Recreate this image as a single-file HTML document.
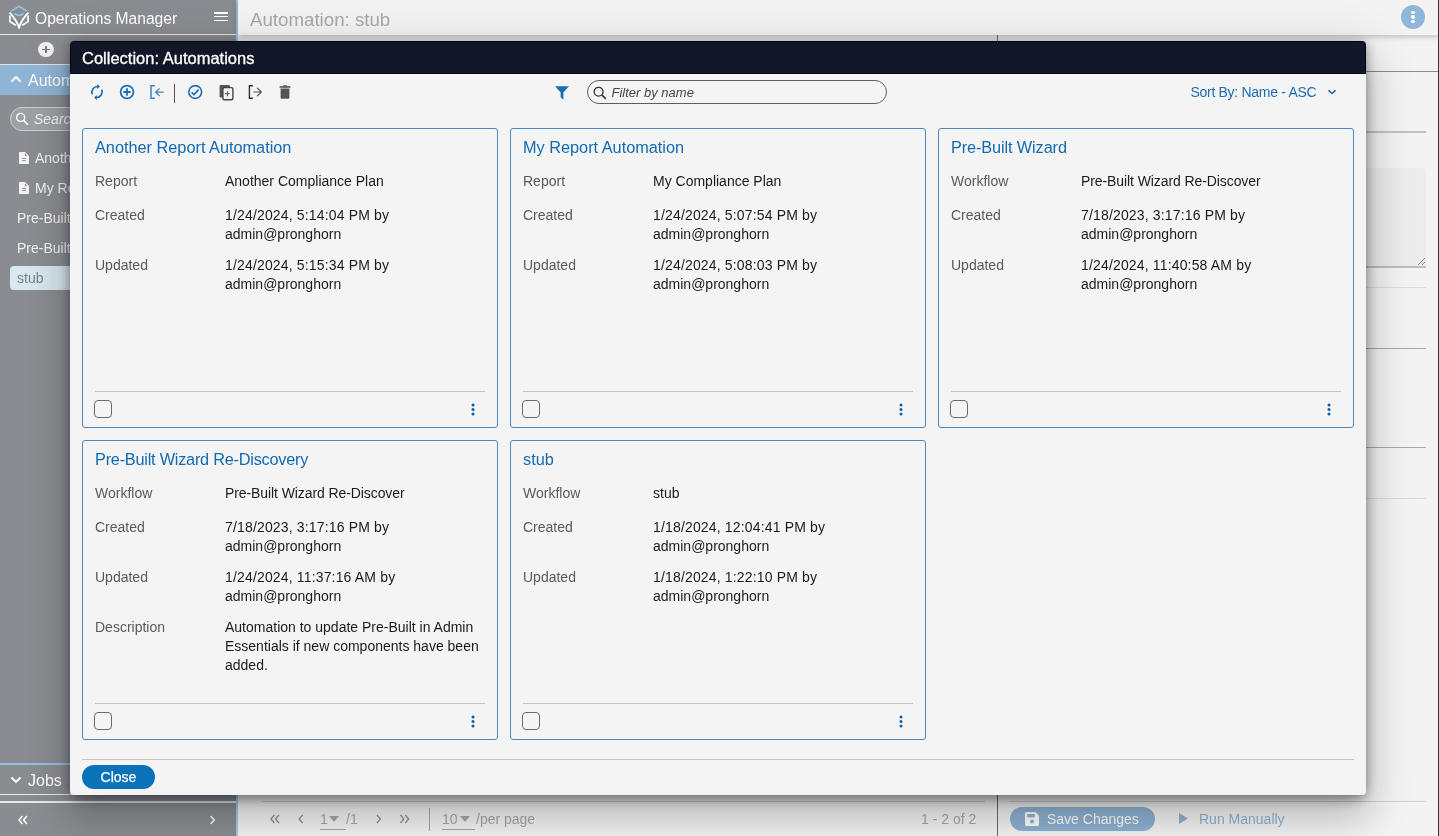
<!DOCTYPE html>
<html><head><meta charset="utf-8">
<style>
*{box-sizing:border-box;margin:0;padding:0}
html,body{width:1439px;height:836px;overflow:hidden}
body{font-family:"Liberation Sans",sans-serif;background:#f3f3f3;position:relative;color:#222}
#root{position:absolute;left:0;top:0;width:1439px;height:836px;will-change:transform}
.a{position:absolute}
/* sidebar */
#side{left:0;top:0;width:237px;height:836px;background:#8b8c91;color:#f2f2f2}
#sideborder{left:236px;top:0;width:2px;height:836px;background:#9ccbea}
.sl{font-size:14px;white-space:nowrap}
/* main */
#hdr{left:238px;top:0;width:1201px;height:35px;background:#f3f3f3}
.ln{height:1px}
/* modal */
#modal{left:70px;top:41px;width:1296px;height:754px;background:#f4f4f4;border-radius:4px;overflow:hidden;box-shadow:0 2px 12px rgba(10,15,30,.4),0 11px 15px -7px rgba(0,0,0,.2),0 24px 38px 3px rgba(0,0,0,.14),0 9px 46px 8px rgba(0,0,0,.12)}
#mtitle{left:0;top:0;width:1296px;height:33px;background:#111726;color:#fff;-webkit-text-stroke:0.3px #fff;font-size:16.5px;line-height:34px;padding-left:11px;border:1px solid #03050c;border-bottom-width:1.5px;line-height:32px}
.card{position:absolute;width:416px;height:300px;border:1px solid #4f86bf;border-radius:3px}
.card .t{position:absolute;left:12px;top:8.4px;font-size:16.3px;line-height:20px;color:#126ab2;white-space:nowrap}
.card .l{position:absolute;left:12px;font-size:14px;line-height:19px;color:#5a5a5a;white-space:nowrap}
.card .v{position:absolute;left:142px;font-size:14px;line-height:19px;color:#1b1b1b;white-space:nowrap}
.card .sep{position:absolute;left:12px;width:390px;top:262px;height:1px;background:#c4c4c4}
.card .cb{position:absolute;left:11px;top:271px;width:18px;height:18px;border:1.6px solid #6a6a6a;border-radius:4px}
.card .kb{position:absolute;left:386.9px;top:272.5px;fill:#0c5eae}
</style></head><body><div id="root">
<!-- SIDEBAR -->
<div id="side" class="a">
  <svg class="a" style="left:8px;top:5px" width="22" height="24" viewBox="0 0 22 24">
    <path d="M3.4 6.1 L11 1.2 L18.6 6.1" fill="none" stroke="#8ec5ea" stroke-width="1.7"/>
    <path d="M6.4 8.5 Q11 12.1 15.6 8.5" fill="none" stroke="#8ec5ea" stroke-width="1.7"/>
    <path d="M1.6 7.6 Q8 14 11 22.4 Q14 14 20.4 7.6" fill="none" stroke="#fff" stroke-width="1.9"/>
    <path d="M1.9 10.6 V16.6 L7.8 20.3" fill="none" stroke="#fff" stroke-width="1.7"/>
    <path d="M20.1 10.6 V16.6 L14.2 20.3" fill="none" stroke="#fff" stroke-width="1.7"/>
  </svg>
  <div class="a" style="left:35px;top:8.5px;font-size:15.6px;line-height:20px;color:#fff">Operations Manager</div>
  <div class="a" style="left:214px;top:12px;width:14px;height:1.7px;background:#fff"></div>
  <div class="a" style="left:214px;top:15.8px;width:14px;height:1.7px;background:#fff"></div>
  <div class="a" style="left:214px;top:19.5px;width:14px;height:1.7px;background:#fff"></div>
  <div class="a" style="left:0;top:33.5px;width:237px;height:1.6px;background:#e4e5e7"></div>
  <div class="a" style="left:37.9px;top:41.5px;width:15.9px;height:15.9px;border-radius:50%;background:#f2f2f2"></div>
  <div class="a" style="left:42px;top:48.7px;width:7.8px;height:1.6px;background:#7a7b80"></div>
  <div class="a" style="left:45.1px;top:45.8px;width:1.6px;height:7.5px;background:#7a7b80"></div>
  <div class="a" style="left:0;top:64px;width:237px;height:1px;background:#e4e5e7"></div>
  <div class="a" style="left:0;top:65px;width:237px;height:30px;background:#8fb5d6"></div>
  <div class="a" style="left:28px;top:71px;font-size:16px;line-height:20px;color:#fff">Automations</div>
  <svg class="a" style="left:10px;top:75px" width="12" height="8" viewBox="0 0 12 8"><path d="M1.5 6.5 L6 2 L10.5 6.5" fill="none" stroke="#fff" stroke-width="1.8"/></svg>
  <div class="a" style="left:10px;top:106.5px;width:200px;height:24.5px;border:1px solid #cfd0d3;border-radius:13px;background:#9fa0a5"></div>
  <svg class="a" style="left:15px;top:111px" width="16" height="16" viewBox="0 0 16 16"><circle cx="5.6" cy="6.4" r="4" fill="none" stroke="#fff" stroke-width="1.4"/><path d="M8.6 9.4 L13 13.8" stroke="#fff" stroke-width="1.6"/></svg>
  <div class="a sl" style="left:34px;top:111px;font-style:italic;color:#f2f2f2">Search</div>
  <svg class="a" style="left:19px;top:152px" width="10" height="12" viewBox="0 0 10 12"><path d="M0 1 Q0 0 1 0 L6 0 L10 4 L10 11 Q10 12 9 12 L1 12 Q0 12 0 11 Z" fill="#f4f4f4"/><path d="M2.9 6.4 H7 M2.9 8.6 H7" stroke="#8b8c91" stroke-width="0.9"/><path d="M5.9 1.6 L5.9 3.8 L8.1 3.8Z" fill="#77787d"/></svg>
  <div class="a sl" style="left:35px;top:150px">Another Report Automation</div>
  <svg class="a" style="left:19px;top:182px" width="10" height="12" viewBox="0 0 10 12"><path d="M0 1 Q0 0 1 0 L6 0 L10 4 L10 11 Q10 12 9 12 L1 12 Q0 12 0 11 Z" fill="#f4f4f4"/><path d="M2.9 6.4 H7 M2.9 8.6 H7" stroke="#8b8c91" stroke-width="0.9"/><path d="M5.9 1.6 L5.9 3.8 L8.1 3.8Z" fill="#77787d"/></svg>
  <div class="a sl" style="left:35px;top:180px">My Report Automation</div>
  <div class="a sl" style="left:17px;top:210px">Pre-Built Wizard</div>
  <div class="a sl" style="left:17px;top:240px">Pre-Built Wizard Re-Discovery</div>
  <div class="a" style="left:10px;top:266px;width:220px;height:24px;border-radius:4px;background:#d8e8f0"></div>
  <div class="a sl" style="left:17px;top:270px;color:#7d7e82">stub</div>
  <div class="a" style="left:0;top:763px;width:237px;height:2px;background:#8fc3e6"></div>
  <svg class="a" style="left:10px;top:776px" width="12" height="8" viewBox="0 0 12 8"><path d="M1.5 1.5 L6 6 L10.5 1.5" fill="none" stroke="#fff" stroke-width="1.8"/></svg>
  <div class="a" style="left:28px;top:771px;font-size:16px;line-height:20px;color:#fff">Jobs</div>
  <div class="a" style="left:0;top:794px;width:237px;height:1px;background:#e8e8ea"></div>
  <div class="a" style="left:0;top:801px;width:237px;height:1.5px;background:#e8e8ea"></div>
  <svg class="a" style="left:10px;top:806px" width="30" height="28"><path d="M12.4 10 L9 14 L12.4 18 M16.9 10 L13.5 14 L16.9 18" fill="none" stroke="#fff" stroke-width="1.5"/></svg>
  <svg class="a" style="left:200px;top:806px" width="30" height="28"><path d="M10.6 10 L14.4 14 L10.6 18" fill="none" stroke="#fff" stroke-width="1.5"/></svg>
</div>
<div id="sideborder" class="a"></div>

<!-- MAIN BACKGROUND -->
<div id="hdr" class="a" style="box-shadow:0 1px 6px rgba(0,0,0,.28)"></div>
<div class="a" style="left:250px;top:9px;font-size:18.7px;line-height:22px;color:#a8a8a8">Automation: stub</div>
<div class="a" style="left:1401px;top:5px;width:24px;height:24px;border-radius:50%;background:#8fb7d9"></div>
<div class="a" style="left:1411.3px;top:10.9px;width:3.4px;height:3.4px;border-radius:50%;background:#fff"></div>
<div class="a" style="left:1411.3px;top:15.4px;width:3.4px;height:3.4px;border-radius:50%;background:#fff"></div>
<div class="a" style="left:1411.3px;top:19.9px;width:3.4px;height:3.4px;border-radius:50%;background:#fff"></div>
<div class="a" style="left:997px;top:35px;width:1px;height:801px;background:#6a6a6a"></div>
<div class="a" style="left:1438px;top:0;width:1px;height:836px;background:#333"></div>
<div class="a ln" style="left:997px;top:71px;width:441px;background:#8a8a90"></div>
<div class="a" style="left:1005px;top:131px;width:421px;height:2px;background:#c2c2c2"></div>
<div class="a" style="left:1005px;top:168px;width:421px;height:98px;background:#ececec;border-radius:4px 4px 0 0"></div><div class="a" style="left:1005px;top:266px;width:421px;height:2px;background:#bdbdbd"></div><svg class="a" style="left:1414px;top:254px" width="12" height="12"><path d="M11 4 L4 11 M11 8 L8 11" stroke="#8a8a8a" stroke-width="1"/></svg>
<div class="a ln" style="left:1005px;top:287px;width:421px;background:#dcdcdc"></div>
<div class="a ln" style="left:1005px;top:348px;width:421px;background:#a8a8a8"></div>
<div class="a ln" style="left:1005px;top:447px;width:421px;background:#a8a8a8"></div>
<div class="a ln" style="left:1005px;top:498px;width:421px;background:#dcdcdc"></div>
<div class="a ln" style="left:1009px;top:801px;width:417px;background:#d0d0d0"></div>
<div class="a ln" style="left:262px;top:801px;width:723px;background:#c8c8c8"></div>
<!-- BOTTOM BAR -->
<svg class="a" style="left:264px;top:806px" width="50" height="28"><path d="M10.4 9 L7 13 L10.4 17 M14.9 9 L11.5 13 L14.9 17 M38.7 9 L35.1 13 L38.7 17" fill="none" stroke="#8e8e8e" stroke-width="1.3"/></svg>

<div class="a" style="left:320px;top:810px;font-size:14px;line-height:19px;color:#a6a6a6">1</div>
<svg class="a" style="left:329px;top:816px" width="10" height="6"><path d="M0 0 H10 L5 6Z" fill="#a6a6a6"/></svg>
<div class="a" style="left:320px;top:829px;width:26px;height:1px;background:#a6a6a6"></div>
<div class="a" style="left:346px;top:810px;font-size:14px;line-height:19px;color:#a6a6a6">/1</div>
<svg class="a" style="left:368px;top:806px" width="50" height="28"><path d="M8.9 9 L12.5 13 L8.9 17 M32.5 9 L35.8 13 L32.5 17 M37.2 9 L40.7 13 L37.2 17" fill="none" stroke="#8e8e8e" stroke-width="1.3"/></svg>

<div class="a" style="left:429px;top:808px;width:1px;height:23px;background:#a6a6a6"></div>
<div class="a" style="left:442px;top:810px;font-size:14px;line-height:19px;color:#a6a6a6">10</div>
<svg class="a" style="left:460px;top:816px" width="10" height="6"><path d="M0 0 H10 L5 6Z" fill="#a6a6a6"/></svg>
<div class="a" style="left:442px;top:829px;width:33px;height:1px;background:#a6a6a6"></div>
<div class="a" style="left:476px;top:810px;font-size:14px;line-height:19px;color:#a6a6a6">/per page</div>
<div class="a" style="left:921px;top:810px;font-size:14px;line-height:19px;color:#a6a6a6">1 - 2 of 2</div>
<div class="a" style="left:1010px;top:807px;width:145px;height:24px;border-radius:12px;background:#8fb3d3"></div>
<svg class="a" style="left:1025px;top:812px" width="14" height="14" viewBox="0 0 14 14"><path d="M0 1.5 Q0 0 1.5 0 H10.5 L14 3.5 V12.5 Q14 14 12.5 14 H1.5 Q0 14 0 12.5Z" fill="#fff"/><rect x="2.2" y="2" width="7.5" height="3.4" fill="#8fb3d3"/><circle cx="7" cy="9.6" r="2" fill="#8fb3d3"/></svg>
<div class="a" style="left:1047px;top:810px;font-size:14px;line-height:19px;color:#fff">Save Changes</div>
<svg class="a" style="left:1179px;top:813px" width="9" height="11"><path d="M0 0 L9 5.5 L0 11Z" fill="#8fb3d3"/></svg>
<div class="a" style="left:1199px;top:810px;font-size:14px;line-height:19px;color:#8fb3d3">Run Manually</div>
<!-- MODAL -->
<div id="modal" class="a">
  <div id="mtitle" class="a">Collection: Automations</div>
  <svg class="a" style="left:16px;top:39px" width="24" height="24" viewBox="0 0 24 24"><g fill="none" stroke="#1c6db3" stroke-width="1.7"><path d="M6.4 14.4 A5.6 5.6 0 0 1 11.8 6.5"/><path d="M15.7 9.6 A5.6 5.6 0 0 1 10.3 17.5"/></g><path d="M11.2 4.1 L14 6.6 L11.2 9.1Z" fill="#1c6db3"/><path d="M10.8 14.9 L8 17.4 L10.8 19.9Z" fill="#1c6db3"/></svg>
  <svg class="a" style="left:49px;top:43px" width="16" height="16" viewBox="0 0 16 16"><circle cx="8" cy="8" r="6.4" fill="none" stroke="#1c6db3" stroke-width="1.7"/><path d="M8 4.3 V11.7 M4.3 8 H11.7" stroke="#1c6db3" stroke-width="1.8"/></svg>
  <svg class="a" style="left:79px;top:43px" width="16" height="16" viewBox="0 0 16 16"><path d="M5.8 1.8 H2 V14.2 H5.8" fill="none" stroke="#3b82c4" stroke-width="1.5"/><path d="M14.7 8.2 H6.8 M10.6 4.4 L6.6 8.2 L10.6 12" fill="none" stroke="#3b82c4" stroke-width="1.25"/></svg>
  <div class="a" style="left:104px;top:43px;width:1.2px;height:19px;background:#555"></div>
  <svg class="a" style="left:117px;top:43px" width="16" height="16" viewBox="0 0 16 16"><circle cx="8.2" cy="8" r="6.4" fill="none" stroke="#1c6db3" stroke-width="1.6"/><path d="M4.6 8.4 L7 10.6 L11.6 5.6" fill="none" stroke="#1c6db3" stroke-width="1.6"/></svg>
  <svg class="a" style="left:148px;top:43px" width="16" height="17" viewBox="0 0 16 17"><rect x="1.6" y="0.9" width="10.4" height="12.6" rx="1.2" fill="#555"/><rect x="4.9" y="3.6" width="10" height="12.1" rx="1.5" fill="#f4f4f4" stroke="#444" stroke-width="1.4"/><path d="M9.4 7.2 V12.2 M6.9 9.7 H11.9" stroke="#555" stroke-width="1"/></svg>
  <svg class="a" style="left:178px;top:43px" width="16" height="16" viewBox="0 0 16 16"><path d="M4.8 1.8 H1.4 V14.2 H4.8" fill="none" stroke="#333" stroke-width="1.4"/><path d="M5.3 8 H13 M9.2 3.9 L13.3 8 L9.2 12.1" fill="none" stroke="#555" stroke-width="1.2"/></svg>
  <svg class="a" style="left:208px;top:43px" width="14" height="16" viewBox="0 0 14 16"><rect x="1.6" y="2.2" width="10.8" height="1.6" fill="#555"/><rect x="5" y="1.3" width="4" height="1.5" fill="#555"/><path d="M2.6 4.6 H11.4 V13.5 Q11.4 14.8 10.1 14.8 H3.9 Q2.6 14.8 2.6 13.5Z" fill="#555"/></svg>
  <svg class="a" style="left:484px;top:44px" width="16" height="16" viewBox="0 0 16 16"><path d="M1 1.3 H15 L9.4 7.4 V14.8 L6.6 12.2 V7.4Z" fill="#1c6db3"/></svg>
  <div class="a" style="left:517px;top:39px;width:300px;height:24px;border:1.5px solid #5e5e5e;border-radius:12px"></div>
  <svg class="a" style="left:522px;top:44px" width="16" height="16" viewBox="0 0 16 16"><circle cx="6.6" cy="6.7" r="4.4" fill="none" stroke="#333" stroke-width="1.35"/><path d="M9.8 9.9 L13.8 13.9" stroke="#333" stroke-width="1.5"/></svg>
  <div class="a" style="left:541.5px;top:43.5px;font-size:13px;line-height:16px;font-style:italic;color:#444">Filter by name</div>
  <div class="a" style="left:1120.5px;top:42px;font-size:14px;line-height:19px;color:#1c6db3;letter-spacing:-0.3px">Sort By: Name - ASC</div>
  <svg class="a" style="left:1257px;top:47px" width="10" height="8" viewBox="0 0 10 8"><path d="M1.5 2.4 L5 5.6 L8.6 2.4" fill="none" stroke="#1467b0" stroke-width="1.45"/></svg>
  <div class="card" style="left:12px;top:87px">
    <div class="t">Another Report Automation</div>
    <div class="l" style="top:42.6px">Report</div>
    <div class="v" style="top:42.6px">Another Compliance Plan</div>
    <div class="l" style="top:76.6px">Created</div>
    <div class="v" style="top:76.6px"><span style="letter-spacing:.16px">1/24/2024, 5:14:04 PM by</span><br>admin@pronghorn</div>
    <div class="l" style="top:126.6px">Updated</div>
    <div class="v" style="top:126.6px"><span style="letter-spacing:.16px">1/24/2024, 5:15:34 PM by</span><br>admin@pronghorn</div>
    <div class="sep"></div><div class="cb"></div>
    <svg class="kb" width="6" height="16" viewBox="0 0 6 16"><circle cx="3" cy="3" r="1.5"/><circle cx="3" cy="7.6" r="1.5"/><circle cx="3" cy="12.1" r="1.5"/></svg>
  </div>
  <div class="card" style="left:440px;top:87px">
    <div class="t">My Report Automation</div>
    <div class="l" style="top:42.6px">Report</div>
    <div class="v" style="top:42.6px">My Compliance Plan</div>
    <div class="l" style="top:76.6px">Created</div>
    <div class="v" style="top:76.6px"><span style="letter-spacing:.16px">1/24/2024, 5:07:54 PM by</span><br>admin@pronghorn</div>
    <div class="l" style="top:126.6px">Updated</div>
    <div class="v" style="top:126.6px"><span style="letter-spacing:.16px">1/24/2024, 5:08:03 PM by</span><br>admin@pronghorn</div>
    <div class="sep"></div><div class="cb"></div>
    <svg class="kb" width="6" height="16" viewBox="0 0 6 16"><circle cx="3" cy="3" r="1.5"/><circle cx="3" cy="7.6" r="1.5"/><circle cx="3" cy="12.1" r="1.5"/></svg>
  </div>
  <div class="card" style="left:868px;top:87px">
    <div class="t" style="letter-spacing:-0.11px">Pre-Built Wizard</div>
    <div class="l" style="top:42.6px">Workflow</div>
    <div class="v" style="top:42.6px;letter-spacing:-0.09px">Pre-Built Wizard Re-Discover</div>
    <div class="l" style="top:76.6px">Created</div>
    <div class="v" style="top:76.6px"><span style="letter-spacing:.16px">7/18/2023, 3:17:16 PM by</span><br>admin@pronghorn</div>
    <div class="l" style="top:126.6px">Updated</div>
    <div class="v" style="top:126.6px"><span style="letter-spacing:.16px">1/24/2024, 11:40:58 AM by</span><br>admin@pronghorn</div>
    <div class="sep"></div><div class="cb"></div>
    <svg class="kb" width="6" height="16" viewBox="0 0 6 16"><circle cx="3" cy="3" r="1.5"/><circle cx="3" cy="7.6" r="1.5"/><circle cx="3" cy="12.1" r="1.5"/></svg>
  </div>
  <div class="card" style="left:12px;top:399px">
    <div class="t" style="letter-spacing:-0.23px">Pre-Built Wizard Re-Discovery</div>
    <div class="l" style="top:42.6px">Workflow</div>
    <div class="v" style="top:42.6px;letter-spacing:-0.09px">Pre-Built Wizard Re-Discover</div>
    <div class="l" style="top:76.6px">Created</div>
    <div class="v" style="top:76.6px"><span style="letter-spacing:.16px">7/18/2023, 3:17:16 PM by</span><br>admin@pronghorn</div>
    <div class="l" style="top:126.6px">Updated</div>
    <div class="v" style="top:126.6px"><span style="letter-spacing:.16px">1/24/2024, 11:37:16 AM by</span><br>admin@pronghorn</div>
    <div class="l" style="top:176.6px">Description</div>
    <div class="v" style="top:176.6px">Automation to update Pre-Built in Admin<br>Essentials if new components have been<br>added.</div>
    <div class="sep"></div><div class="cb"></div>
    <svg class="kb" width="6" height="16" viewBox="0 0 6 16"><circle cx="3" cy="3" r="1.5"/><circle cx="3" cy="7.6" r="1.5"/><circle cx="3" cy="12.1" r="1.5"/></svg>
  </div>
  <div class="card" style="left:440px;top:399px">
    <div class="t">stub</div>
    <div class="l" style="top:42.6px">Workflow</div>
    <div class="v" style="top:42.6px">stub</div>
    <div class="l" style="top:76.6px">Created</div>
    <div class="v" style="top:76.6px"><span style="letter-spacing:.16px">1/18/2024, 12:04:41 PM by</span><br>admin@pronghorn</div>
    <div class="l" style="top:126.6px">Updated</div>
    <div class="v" style="top:126.6px"><span style="letter-spacing:.16px">1/18/2024, 1:22:10 PM by</span><br>admin@pronghorn</div>
    <div class="sep"></div><div class="cb"></div>
    <svg class="kb" width="6" height="16" viewBox="0 0 6 16"><circle cx="3" cy="3" r="1.5"/><circle cx="3" cy="7.6" r="1.5"/><circle cx="3" cy="12.1" r="1.5"/></svg>
  </div>
  <div class="a" style="left:12px;top:718px;width:1272px;height:1px;background:#c4c4c4"></div>
  <div class="a" style="left:12px;top:724px;width:73px;height:24px;border-radius:12px;background:#0a72b9;color:#fff;font-size:14px;line-height:25px;text-align:center;-webkit-text-stroke:0.25px #fff">Close</div>
</div>
</div></body></html>
